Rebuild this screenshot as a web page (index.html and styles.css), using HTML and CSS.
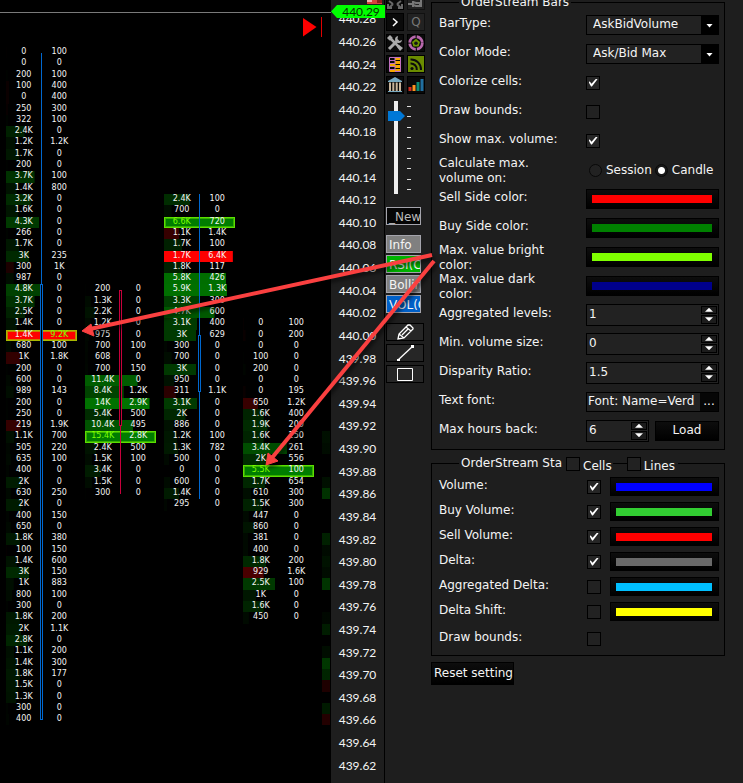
FILE: index.html
```html
<!DOCTYPE html>
<html lang="en">
<head>
<meta charset="utf-8">
<title>OrderStream</title>
<link rel="stylesheet" href="styles.css">
</head>
<body>
<main class="app">
  <section class="chart" id="chart" aria-label="Footprint chart">
    <svg class="play" viewBox="0 0 28 22" aria-hidden="true"><path d="M0 1L13.500 10L0 19.500Z" fill="#f00"/><path d="M18.500 0V20" stroke="#e00000"/></svg>
  </section>
  <section class="axis" id="axis" aria-label="Price axis">
    <svg class="flag" viewBox="0 0 15 4" aria-hidden="true"><path d="M0 0H15V4H0Z" fill="#d8423c"/><path d="M0 0H5V2H0Z" fill="#f0b0b0"/><path d="M10 0H15V3H10Z" fill="#8c1c1c"/></svg>
    <div class="tag">440.29</div>
  </section>
  <aside class="tools">
    <div class="icons">
      <button class="tool" aria-label="Fit"><svg viewBox="0 0 16 16"><path d="M2 15L6 11M14 15L10 11M2 8L6 11M14 8L10 11M1 11V15H5M15 11V15H11" stroke="#686868" stroke-width="2" fill="none"/></svg></button>
      <button class="tool off" aria-label="Pin"><svg viewBox="0 0 16 16"><path d="M0 11H5M5 8V14M5 9L8 10H12V13H8L5 12M13 7V14" stroke="#777" stroke-width="2" fill="none"/></svg></button>
      <button class="tool" aria-label="Expand"><svg viewBox="0 0 16 16"><path d="M6 4.500L10 8L6 12" stroke="#fff" stroke-width="1.500" fill="none"/></svg></button>
      <button class="tool off">Q</button>
      <button class="tool" aria-label="Settings"><svg viewBox="0 0 16 16"><path d="M3 3L13 13" stroke="#aaa" stroke-width="2.500"/><path d="M2 14L9.500 6.500" stroke="#aaa" stroke-width="3"/><path d="M11 1A3.500 3.500 0 1 0 15 5L12.500 6L10.500 4Z" fill="#aaa"/><path d="M0 3L3 0L5.500 2.500L5 5L2.500 5.500Z" fill="#aaa"/><path d="M10 12L12 10L16 13L13 16Z" fill="#aaa"/></svg></button>
      <button class="tool" aria-label="Target"><svg viewBox="0 0 16 16"><circle cx="8" cy="8" r="6.300" fill="none" stroke="#b968ac" stroke-width="2.800" stroke-dasharray="8.700 1.200"/><path d="M8 3.800L12 7L10.600 11.500H5.400L4 7Z" fill="#6f9400"/><circle cx="8" cy="8.300" r="1.800" fill="#151515"/></svg></button>
      <button class="tool" aria-label="Table"><svg viewBox="0 0 16 16"><path d="M2 1H14V16H2Z" fill="#f5a800"/><path d="M2 1H8V16H2Z" fill="#080808"/><path d="M2.500 1.500H13.500V15.500H2.500ZM8 1V16" stroke="#c070c0" fill="none"/><path d="M3 4.500H8M3 7.500H8M3 10.500H8M3 13.500H8" stroke="#c070c0"/><path d="M3 9H8M3 15H8" stroke="#f5a800" stroke-width="2"/><path d="M8.500 4.500H13M8.500 8.500H13M8.500 12.500H13" stroke="#080808"/></svg></button>
      <button class="tool feed" aria-label="Feed"><svg viewBox="0 0 16 16"><circle cx="4" cy="12.500" r="1.600" fill="#0c0c0c"/><path d="M2.500 7.500A6 6 0 0 1 8.800 14M2.500 3.500A10 10 0 0 1 13 14" stroke="#0c0c0c" stroke-width="2" fill="none"/></svg></button>
      <button class="tool" aria-label="Exchange"><svg viewBox="0 0 16 16"><path d="M8 0L15 4V5H1V4Z" fill="#78a9c0"/><path d="M3 5.500V14M6.300 5.500V14M9.700 5.500V14M13 5.500V14" stroke="#c9b59b" stroke-width="2"/><path d="M1 14.500H15" stroke="#78a9c0"/></svg></button>
      <button class="tool" aria-label="Levels"><svg viewBox="0 0 16 16"><path d="M2 10V14" stroke="#d22d20" stroke-width="3"/><path d="M6 8V14" stroke="#ff9320" stroke-width="3"/><path d="M10 5V14" stroke="#0c8b75" stroke-width="3"/><path d="M14 2V14" stroke="#206fa0" stroke-width="3"/></svg></button>
    </div>
    <div class="zoom">
      <input type="range" min="0" max="100" value="88" aria-label="Zoom">
      <div class="ticks"><i></i><i></i><i></i><i></i><i></i><i></i><i></i><i></i><i></i></div>
    </div>
    <button class="chip dark">_New</button>
    <div class="chips">
      <button class="chip grey">Info</button>
      <button class="chip green">RSI(C</button>
      <button class="chip grey">Bollin</button>
      <button class="chip blue">VOL(C</button>
    </div>
    <div class="draws">
      <button class="draw" aria-label="Pencil"><svg viewBox="0 0 36 16"><path d="M11 15L12 10L21 1H23L26 4V5L17 14ZM12 10L17 14M19 3L24 7M15 11L21 5" stroke="#fff" stroke-width="1.300" fill="none"/></svg></button>
      <button class="draw" aria-label="Line"><svg viewBox="0 0 36 16"><path d="M11 15L26 1" stroke="#fff" stroke-width="1.300"/><path d="M10 14H13V16H10ZM24 0H27V3H24Z" fill="#fff"/></svg></button>
      <button class="draw" aria-label="Rectangle"><svg viewBox="0 0 36 16"><path d="M10.500 2.500H25.500V14.500H10.500Z" stroke="#fff" fill="none"/></svg></button>
    </div>
  </aside>
  <form class="panel">
    <fieldset class="bars">
      <legend>OrderStream Bars</legend>
      <div class="field"><label for="type">BarType:</label><div class="pick"><select id="type"><option>AskBidVolume</option></select></div></div>
      <div class="field"><label for="mode">Color Mode:</label><div class="pick"><select id="mode"><option>Ask/Bid Max</option></select></div></div>
      <div class="field"><label for="cells">Colorize cells:</label><input id="cells" type="checkbox" checked></div>
      <div class="field"><label for="bounds">Draw bounds:</label><input id="bounds" type="checkbox"></div>
      <div class="field"><label for="showmax">Show max. volume:</label><input id="showmax" type="checkbox" checked></div>
      <div class="field two"><span class="name">Calculate max. volume on:</span><div class="radios"><label><input type="radio" name="calc">Session</label><label><input type="radio" name="calc" checked>Candle</label></div></div>
      <div class="field"><label for="c1">Sell Side color:</label><button type="button" id="c1" class="color"><i class="red"></i></button></div>
      <div class="field"><label for="c2">Buy Side color:</label><button type="button" id="c2" class="color"><i class="darkgreen"></i></button></div>
      <div class="field two"><label for="c3">Max. value bright color:</label><button type="button" id="c3" class="color"><i class="chartreuse"></i></button></div>
      <div class="field two"><label for="c4">Max. value dark color:</label><button type="button" id="c4" class="color"><i class="navy"></i></button></div>
      <div class="field"><label for="n1">Aggregated levels:</label><div class="spin"><input id="n1" type="text" value="1"><span class="steps"><button type="button" aria-label="Up"></button><button type="button" class="down" aria-label="Down"></button></span></div></div>
      <div class="field"><label for="n2">Min. volume size:</label><div class="spin"><input id="n2" type="text" value="0"><span class="steps"><button type="button" aria-label="Up"></button><button type="button" class="down" aria-label="Down"></button></span></div></div>
      <div class="field"><label for="n3">Disparity Ratio:</label><div class="spin"><input id="n3" type="text" value="1.5"><span class="steps"><button type="button" aria-label="Up"></button><button type="button" class="down" aria-label="Down"></button></span></div></div>
      <div class="field"><label for="font">Text font:</label><div class="font"><input id="font" type="text" value="Font: Name=Verd"><button type="button">...</button></div></div>
      <div class="field"><label for="hours">Max hours back:</label><div class="hours"><div class="spin"><input id="hours" type="text" value="6"><span class="steps"><button type="button" aria-label="Up"></button><button type="button" class="down" aria-label="Down"></button></span></div><button type="button" class="load">Load</button></div></div>
    </fieldset>
    <fieldset class="stats">
      <legend><span class="title">OrderStream Sta</span><input type="checkbox" id="allcells"><label for="allcells">Cells</label><i class="rule"></i><input type="checkbox" id="alllines"><label for="alllines">Lines</label></legend>
      <div class="stat"><label for="s1">Volume:</label><input id="s1" type="checkbox" checked><button type="button" class="color" aria-label="Volume color"><i class="blue"></i></button></div>
      <div class="stat"><label for="s2">Buy Volume:</label><input id="s2" type="checkbox" checked><button type="button" class="color" aria-label="Buy volume color"><i class="lime"></i></button></div>
      <div class="stat"><label for="s3">Sell Volume:</label><input id="s3" type="checkbox" checked><button type="button" class="color" aria-label="Sell volume color"><i class="red"></i></button></div>
      <div class="stat"><label for="s4">Delta:</label><input id="s4" type="checkbox" checked><button type="button" class="color" aria-label="Delta color"><i class="dim"></i></button></div>
      <div class="stat"><label for="s5">Aggregated Delta:</label><input id="s5" type="checkbox"><button type="button" class="color" aria-label="Aggregated delta color"><i class="sky"></i></button></div>
      <div class="stat"><label for="s6">Delta Shift:</label><input id="s6" type="checkbox"><button type="button" class="color" aria-label="Delta shift color"><i class="yellow"></i></button></div>
      <div class="stat last"><label for="s7">Draw bounds:</label><input id="s7" type="checkbox"></div>
    </fieldset>
    <button type="button" class="reset">Reset setting</button>
  </form>
  <svg class="arrows" viewBox="0 0 743 783" aria-hidden="true">
    <g fill="#fa4040" stroke="#fa4040">
      <path d="M432 255L90 329" stroke-width="4" fill="none"/><path d="M82 331L91 324L94 336Z"/>
      <path d="M434 261L271 459" stroke-width="4" fill="none"/><path d="M266 465L268 453L278 461Z"/>
    </g>
  </svg>
</main>
<script src="chart.js"></script>
</body>
</html>
```
FILE: styles.css
```css
* { box-sizing: border-box; }
body { margin: 0; background: #1e1e1e; color: #f4f4f4; font: 12px/15px "DejaVu Sans", Verdana, sans-serif; }
button, input, select { font: inherit; color: inherit; margin: 0; padding: 0; border-radius: 0; }
button { overflow: hidden; white-space: nowrap; }
.app { position: relative; display: grid; grid-template-columns: minmax(0, 1fr) 53px 47px 312px; height: 100vh; min-height: 700px; overflow: hidden; }

/* Footprint chart */
.chart { position: relative; display: flex; gap: 8px; padding: 47px 0 1px 6px; overflow: hidden; background: linear-gradient(#7a7a7a, #7a7a7a) 0 12px / 100% 1px no-repeat #000; }
.play { position: absolute; right: 0; top: 17px; width: 28px; height: 22px; }
.col { flex: 0 0 71px; display: grid; grid-template-columns: 1fr; grid-template-rows: repeat(130, 1fr); font: 8px/9px "DejaVu Sans", Verdana, sans-serif; }
.row { grid-column: 1; display: grid; grid-template-columns: 1fr 1fr; min-height: 0; text-align: center; background: linear-gradient(var(--c), var(--c)) 0 0 / var(--w) 100% no-repeat; }
.row.max { box-shadow: inset 0 0 0 1px #5ae000, inset 0 0 0 2px #36ae00; }
.row.max.sell { box-shadow: inset 0 0 0 1px #a8b800, inset 0 0 0 2px #c88000; }
.row .peak { color: #7fff00; }
.wick { grid-column: 1; justify-self: center; width: 1px; background: var(--k); }
.body { grid-column: 1; justify-self: center; width: 3px; border: 1px solid var(--k); background: #000; }
.up { --k: #0068d0; }
.fall { --k: #c8003c; }

/* Price axis */
.axis { position: relative; display: grid; grid-auto-rows: 1fr; align-items: center; padding: 8px 0 6px; text-align: center; font: 12px/14px Lato, "Century Gothic", sans-serif; }
.flag { position: absolute; right: 2px; top: 0; width: 15px; height: 4px; }
.tag { position: absolute; left: 0; top: 5px; width: 54px; height: 13px; padding-left: 6px; background: #0f0; color: #063000; line-height: 14px; clip-path: polygon(0 50%, 6px 0, 100% 0, 100% 100%, 6px 100%); }

/* Toolbar */
.tools { padding: 0 0 0 1px; border-left: 1px solid #000; }
.icons { display: grid; grid-template-columns: 18px 18px; grid-auto-rows: 18px; gap: 3px; margin-top: -8px; }
.tool { border: 1px solid #000; background: #0a0a0a; line-height: 16px; }
.tool svg, .draw svg { display: block; width: 100%; height: 100%; }
.off { background: #222; border-color: #111; color: #777; }
.feed { background: #6b8c00; }
.zoom { display: flex; gap: 4px; height: 93px; margin: 7px 0 13px 2px; }
.zoom input { appearance: none; writing-mode: vertical-lr; direction: rtl; width: 17px; height: 93px; background: linear-gradient(#eee, #eee) 6px 0 / 4px 100% no-repeat; }
.zoom input::-webkit-slider-thumb { appearance: none; width: 17px; height: 10px; background: #0078d7; clip-path: polygon(0 0, 12px 0, 100% 50%, 12px 100%, 0 100%); }
.ticks { display: flex; flex-direction: column; justify-content: space-between; padding: 5px 0 4px; margin-left: -2px; }
.ticks i { width: 4px; height: 1px; background: #ddd; }
.chip { display: block; width: 35px; height: 18px; padding: 0 2px; border: 1px solid #a4a4ac; line-height: 18px; text-align: left; text-overflow: clip; }
.chips { display: grid; gap: 2px; margin: 10px 0; }
.dark { background: #050505; color: #bbb; }
.grey { background: #808080; }
.green { background: #00b400; }
.chip.blue { background: #0060c8; }
.draws { display: grid; gap: 3px; }
.draw { width: 38px; height: 18px; border: 1px solid #000; background: #262626; }

/* Settings */
.panel { padding-right: 18px; }
fieldset { margin: 0; padding: 0 5px 0 7px; border: 1px solid #000; min-width: 0; }
legend { height: 15px; margin-left: 20px; padding: 0 2px; white-space: nowrap; }
.bars { margin-top: -5px; padding-bottom: 4px; }
.field { display: grid; grid-template-columns: minmax(0, 1fr) 133px; align-items: center; height: 29px; }
.field > label, .stat > label { padding-bottom: 3px; }
.field.two > label, .name { padding: 2px 20px 0 0; margin: -1px 0; }
.pick { position: relative; height: 20px; border: 1px solid #000; background: #222; }
.pick select { appearance: none; width: 100%; height: 18px; padding: 0 18px 0 6px; border: 0; background: linear-gradient(#000, #000) 100% 0 / 17px 100% no-repeat; }
.pick::after { content: ""; position: absolute; right: 5px; top: 8px; width: 7px; height: 4px; background: #fff; clip-path: polygon(0 0, 100% 0, 50% 100%); }
input[type=checkbox] { appearance: none; flex: none; width: 14px; height: 14px; border: 1px solid #000; background: #222; }
input[type=checkbox]:checked { background: #262626; display: grid; place-items: center; }
input[type=checkbox]:checked::after { content: ""; width: 9px; height: 8px; background: #fff; clip-path: polygon(0 45%, 14% 38%, 34% 65%, 85% 0, 100% 8%, 38% 100%, 28% 100%); }
.radios { display: flex; gap: 3px; white-space: nowrap; padding-left: 3px; }
.radios label { display: flex; align-items: center; gap: 4px; }
input[type=radio] { appearance: none; width: 13px; height: 13px; border: 1px solid #080808; border-radius: 50%; background: #222; }
input[type=radio]:checked { background: radial-gradient(#fff 3px, #181818 4px); }
.color { height: 20px; padding: 0 6px 0 5px; border: 1px solid #000; background: linear-gradient(#0d0d0d, #000); }
.color i { display: block; height: 8px; }
.red { background: #f00; }
.darkgreen { background: #008000; }
.chartreuse { background: #7fff00; }
.navy { background: #00008b; }
.color .blue { background: #00f; }
.lime { background: #32cd32; }
.dim { background: #696969; }
.sky { background: #00bfff; }
.yellow { background: #ff0; }
.spin, .font { display: flex; min-width: 0; height: 22px; border: 1px solid #000; background: #222; }
.spin input, .font input { flex: 1; width: 0; border: 0; padding: 0 2px; background: none; }
.font { height: 20px; }
.font input { padding: 0 0 0 1px; }
.font button { width: 18px; border: 0; background: #060606; }
.steps { display: grid; gap: 1px; width: 16px; margin: 1px; }
.steps button { display: grid; place-items: center; border: 1px solid #000; background: #1c1c1c; }
.steps button::after { content: ""; width: 8px; height: 4px; background: #fff; clip-path: polygon(50% 0, 100% 100%, 0 100%); }
.steps .down::after { clip-path: polygon(0 0, 100% 0, 50% 100%); }
.hours { display: grid; grid-template-columns: 63px 1fr; gap: 6px; align-items: center; }
.load { height: 20px; border: 1px solid #000; background: linear-gradient(#0d0d0d, #000); }
.stats { margin-top: 6px; padding-top: 3px; padding-bottom: 2px; }
.stats legend { display: flex; align-items: center; }
.stats legend label { padding-top: 6px; margin: 0 1px 0 3px; }
.title { width: 105px; overflow: hidden; }
.rule { width: 14px; border-top: 1px solid #000; }
.stat { display: grid; grid-template-columns: minmax(0, 1fr) 14px 109px; column-gap: 9px; align-items: center; height: 25px; }
.stat.last { height: 29px; }
.stat .color { height: 19px; }
.reset { display: block; width: 83px; height: 23px; margin-top: 6px; padding-left: 2px; border: 1px solid #000; background: linear-gradient(#0d0d0d, #000); text-align: left; }

.arrows { position: absolute; left: 0; top: 0; width: 743px; height: 783px; pointer-events: none; filter: drop-shadow(2px 3px 2px rgba(0, 0, 0, .6)); }
```
FILE: chart.js
```js
const columns = [
  { start: 0, marks: [["wick up", 2, 43], ["body up", 43, 120]],
    rows: "0 100;0 0;200 100;100 400;0 400;250 300;322 100;2.4K 0;1.2K 1.2K;1.7K 0;200 0;3.7K 100;1.4K 800;3.2K 0;1.6K 0;4.3K 0;266 0;1.7K 0;3K 235;300 1K;987 0;4.8K 0;3.7K 0;2.5K 0;1.4K 0;1.4K 9.2K;680 100;1K 1.8K;200 0;600 0;989 143;200 0;250 0;219 1.9K;1.1K 700;505 220;635 100;400 0;2K 0;630 250;2K 0;400 150;650 0;1.8K 380;100 150;1.4K 600;3K 150;1K 883;800 100;300 0;1.8K 200;2K 1.1K;2.8K 0;1.1K 200;1.4K 300;1.8K 177;1.5K 0;1.3K 0;300 0;400 0" },
  { start: 21, marks: [["body fall", 44, 68], ["wick fall", 68, 80]],
    rows: "200 0;1.3K 0;2.2K 0;1.2K 0;975 0;700 100;608 0;700 150;11.4K 0;8.4K 1.2K;14K 2.9K;5.4K 500;10.4K 495;15.4K 2.8K;2.4K 500;1.5K 100;3.4K 0;1.5K 0;300 0" },
  { start: 13, marks: [["wick up", 27, 81], ["body up", 52, 62]],
    rows: "2.4K 100;700 0;6.6K 720;1.1K 1.4K;1.7K 100;1.7K 6.4K;1.8K 117;5.8K 426;5.9K 1.3K;3.3K 300;4.7K 600;3.1K 400;3K 629;300 0;700 0;3K 0;950 0;311 1.1K;3.1K 0;2K 0;886 0;1.2K 100;1.3K 782;500 0;0 0;600 0;1.4K 0;295 0" },
  { start: 24, marks: [],
    rows: "0 100;0 200;0 0;100 0;200 0;0 0;0 195;650 1.2K;1.6K 400;1.9K 200;1.6K 250;3.4K 261;2K 556;5.5K 100;1.7K 654;610 300;1.5K 300;447 0;860 0;381 0;400 0;1.8K 200;929 1.6K;2.5K 100;1K 0;1.6K 0;450 0" }
];

// Bars of the newest candle, mostly hidden behind the price axis: row -> signed strength
const edge = { 34: 12, 35: 9, 38: 12, 39: 38, 43: 25, 44: 8, 45: 14, 46: 9, 47: 40, 50: 6, 51: 22, 53: 10, 54: 42, 55: 28, 56: -12, 58: 20, 59: -14 };

const chart = document.getElementById("chart");
const amount = t => t.endsWith("K") ? parseFloat(t) * 1000 : Number(t);

function add(parent, cls, from, to) {
  const el = document.createElement("div");
  el.className = cls;
  el.style.gridRow = from + " / " + to;
  parent.append(el);
  return el;
}

for (const { start, marks, rows } of columns) {
  const col = document.createElement("div");
  col.className = "col";
  const cells = rows.split(";").map(r => r.split(" "));
  const top = Math.max(...cells.flat().map(amount));
  cells.forEach(([a, b], i) => {
    const line = (start + i) * 2 + 1;
    const el = add(col, "row", line, line + 2);
    const bid = amount(a), ask = amount(b);
    const part = Math.max(bid, ask) / top;
    const sell = ask > bid;
    const level = sell && part > 0.9 ? 1 : part;
    el.style.setProperty("--w", part * 100 + "%");
    el.style.setProperty("--c", sell ? `rgb(${Math.round(255 * level)},0,0)` : `rgb(0,${Math.round(125 * level)},0)`);
    if (part === 1) el.classList.add("max", sell ? "sell" : "buy");
    for (const [t, v] of [[a, bid], [b, ask]]) {
      const s = document.createElement("span");
      s.textContent = t;
      if (v === top) s.className = "peak";
      el.append(s);
    }
  });
  for (const [cls, from, to] of marks) add(col, cls, from, to);
  chart.append(col);
}

const last = document.createElement("div");
last.className = "col";
for (const [r, v] of Object.entries(edge)) {
  const el = add(last, "row", r * 2 + 1, r * 2 + 3);
  el.style.setProperty("--w", "8px");
  el.style.setProperty("--c", v < 0 ? `rgb(${-v * 2.5},0,0)` : `rgb(0,${v * 1.3},0)`);
}
chart.append(last);

const axis = document.getElementById("axis");
for (let p = 44028; p >= 43962; p -= 2) {
  const s = document.createElement("span");
  s.textContent = (p / 100).toFixed(2);
  axis.append(s);
}
axis.append(axis.querySelector(".tag"));
```
